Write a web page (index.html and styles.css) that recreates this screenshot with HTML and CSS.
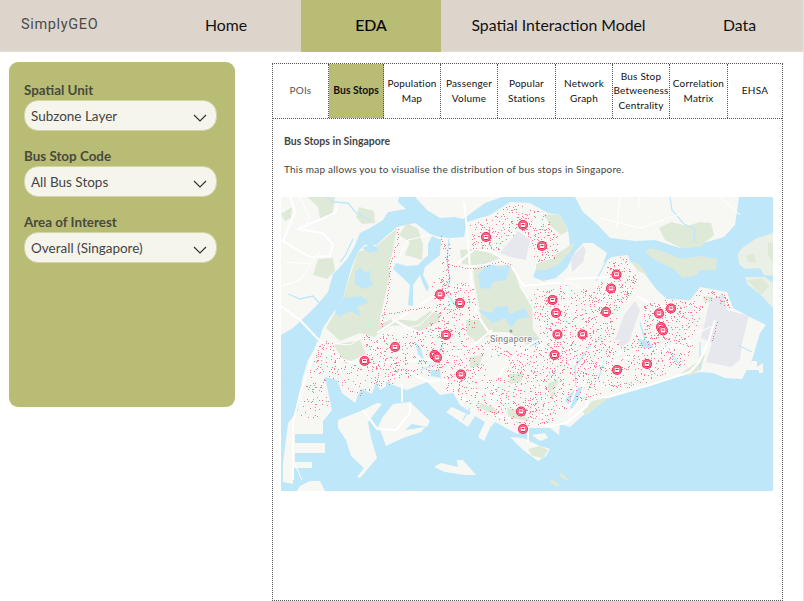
FILE: index.html
```html
<!DOCTYPE html>
<html lang="en">
<head>
<meta charset="utf-8">
<title>SimplyGEO</title>
<link rel="stylesheet" href="styles.css">
</head>
<body>
<nav class="nav">
  <span class="brand">SimplyGEO</span><a>Home</a><a class="on">EDA</a><a>Spatial Interaction Model</a><a>Data</a>
</nav>
<main class="content">
  <aside class="filters">
    <div class="field"><label>Spatial Unit</label><div class="select"><span>Subzone Layer</span><svg viewBox="0 0 14 8"><path d="M1 1l6 6 6-6"/></svg></div></div>
    <div class="field"><label>Bus Stop Code</label><div class="select"><span>All Bus Stops</span><svg viewBox="0 0 14 8"><path d="M1 1l6 6 6-6"/></svg></div></div>
    <div class="field"><label>Area of Interest</label><div class="select"><span>Overall (Singapore)</span><svg viewBox="0 0 14 8"><path d="M1 1l6 6 6-6"/></svg></div></div>
  </aside>
  <section class="panel">
    <div class="tabs">
      <div class="muted"><span>POIs</span></div><div class="active"><span>Bus Stops</span></div><div><span>Population<br>Map</span></div><div><span>Passenger<br>Volume</span></div><div><span>Popular<br>Stations</span></div><div><span>Network<br>Graph</span></div><div><span>Bus Stop<br>Betweeness<br>Centrality</span></div><div><span>Correlation<br>Matrix</span></div><div><span>EHSA</span></div>
    </div>
    <h1>Bus Stops in Singapore</h1>
    <p>This map allows you to visualise the distribution of bus stops in Singapore.</p>
    <svg class="map" viewBox="281 197 492 294" preserveAspectRatio="none">
      <rect class="water" x="281" y="197" width="493" height="295"/>
      <g class="land">
        <path d="M281 197H399L398 202 406 209 388 212 383 220 370 228 360 233 355 245 348 258 340 267 333 274 328 292 318 304 307 315 293 328 281 335Z"/>
        <path d="M415 197H502L485 203 470 214 463 219 455 217 440 218 427 210Z"/>
        <path d="M575 197L583 212 597 224 610 238 636 241 655 240 680 248 697 245 724 237 735 225 738 205 739 197Z"/>
        <path d="M323 328L335 310 343 298 347 283 352 266 358 252 364 245 377 245 385 237 397 227 406 225 415 223 430 234 440 237 450 238 464 237 467 222 490 215 510 202 530 203 548 213 560 215 568 230 570 245 560 256 545 262 536 269 533 277 543 281 556 278 567 268 575 252 583 243 593 243 607 253 603 263 612 257 628 255 630 262 640 267 647 277 657 290 667 299 690 300 700 287 727 292 733 308 750 317 766 325 760 333 752 360 742 379 725 378 713 373 700 372 670 378 643 387 620 393 605 400 587 412 570 427 560 424 559 435 550 428 530 428 517 434 497 423 480 418 460 405 453 393 440 395 427 382 407 390 390 384 380 390 376 382 372 394 362 389 358 395 355 403 342 393 337 380 325 377 332 410 323 421V434H295V443H325V453H295V462H312V468H293V484L283 482V463L288 423 298 410 302 380 308 360 318 343Z"/>
        <path d="M338 420L363 410 377 403 382 404 368 422 371 438 377 458 360 478 357 477 364 468 351 456 346 440 338 428Z"/>
        <path d="M364 410L377 429 382 418 393 404 410 402 430 421 427 427 412 424 405 430 425 427 421 432 403 438 386 446 381 432Z"/>
        <path d="M434 467L441 463 458 467 457 460 463 460 476 475 465 475 445 472Z"/>
        <path d="M446 412L452 407 469 415 473 408 460 403 463 399 495 422 490 428 484 441 478 437 485 422 475 416 468 427Z"/>
        <path d="M510 437L523 438 540 446 550 449 546 456 538 461 523 450Z"/>
        <path d="M532 435L545 433 548 438 540 441Z"/>
        <path d="M300 486L310 481H320L325 491H297ZM745 368L752 361H757V367L763 363V373H759V370H746Z"/>
        <path class="isle" d="M773 233L757 238 742 248 738 254 739 264 745 269 760 268 764 275 773 276ZM745 277L765 277 773 283V308L760 294 748 285Z"/>
      </g>
      <g class="green">
        <path d="M348 282L358 252 378 245 397 228 393 250 389 265 390 275 380 318 381 328 360 333 340 341 326 328 343 298Z"/>
        <path d="M360 333L392 319 416 321 430 311 440 314 439 322 420 331 404 325 390 326 374 337Z"/>
        <path d="M334 345L360 340 366 354 345 364Z"/>
        <path d="M407 223L418 229 423 245 422 260 405 255 410 242 399 235Z"/>
        <path d="M473 268L512 264 520 288 532 305 533 330 543 342 530 347 508 332 490 332 481 318 474 280Z"/>
        <path d="M466 320L481 320 490 336 476 342 467 334ZM460 250L480 248 500 258 480 266 462 264Z"/>
        <path d="M543 214L560 215 568 231 561 235 550 225ZM536 264L550 259 563 258 558 265 546 270 536 270Z"/>
        <path d="M645 252L650 248 665 252 680 259 700 256 717 259 716 270 700 270 697 275 683 278 672 268 655 260ZM630 260L639 264 648 275 638 271Z"/>
        <path d="M659 228L671 222 687 226 700 222 711 223 714 235 700 247 681 248 665 240ZM333 258L335 271 327 279 313 275 318 259ZM359 207L374 211 375 223 362 224 356 217Z"/>
        <path d="M281 214L292 207 291 218 285 221ZM307 197H335L332 215 320 219 318 207ZM747 280L762 278 769 286 761 295ZM746 255L754 254 756 263 748 262ZM768 243H773V262L768 256Z"/>
        <path d="M480 403L493 407 498 413 491 416 479 408ZM507 408L517 410 529 420 517 423 508 415ZM583 411L592 401 611 397 601 404 585 416Z"/>
        <path d="M469 357L483 355 479 366 470 368ZM509 374L524 373 521 382 510 384ZM548 383L558 380 553 400 548 391ZM553 256L576 242 570 252 561 262ZM528 449L540 446 548 450 543 458 532 456Z"/>
        <path d="M551 478L560 485 558 487 550 483ZM560 472L569 479 566 481 560 476ZM410 491L413 490 416 491ZM681 373L699 361 705 354 701 369 689 376ZM394 371L400 368 398 374ZM703 296L713 297 713 303 704 301Z"/>
      </g>
      <g class="air">
        <path d="M500 253L518 231 530 240 526 260 510 257Z"/>
        <path d="M571 258L583 245 586 250 583 262 572 272Z"/>
        <path d="M615 340L624 315 635 301 640 310 629 342 622 347Z"/>
        <path d="M701 338L710 300 723 294 727 310 749 316 742 343 740 360 731 367 706 362 712 343Z"/>
      </g>
      <g class="water">
        <path d="M355 272L361 268 365 273 371 270 369 276 373 285 364 289 355 284ZM343 298L361 296 369 303 357 306 360 316 350 311 338 317 335 310ZM362 248L371 244 380 250 370 253Z"/>
        <path d="M432 236L441 240 440 255 425 267 423 275 429 287 427 292 422 281 420 275 413 285 413 306 408 305 410 285 402 277 393 269 396 263 407 266 418 265 428 255 428 244Z"/>
        <path d="M478 275L488 264 503 267 511 264 506 280 493 282 490 289 480 288ZM478 310L492 313 495 307 507 306 510 314 524 308 530 317 518 319 511 328 505 318 493 323ZM527 335L540 340 539 345 531 345Z"/>
        <path d="M415 342L421 348 424 360 418 354ZM430 370H440L441 378 431 376ZM565 400L576 388 585 387 573 411ZM637 339L649 341 654 348 643 348ZM386 382L390 381V388H386Z"/>
      </g>
      <g class="river">
        <path d="M326 197L334 202 348 203 356 213 370 220M340 262L345 256 353 239M288 294L300 299 313 296 320 304M670 197L672 210 684 224 695 229 694 242M449 239L447 260 450 280 446 293 455 305M443 343L435 365 420 370M545 327L560 335M610 254L596 281M592 343L575 367 576 386M604 360L598 380M665 345L681 367M700 342V370M738 345L752 352M645 340L640 322M463 420L470 408"/>
      </g>
      <g class="road thin">
        <path d="M281 286L300 280 320 251M285 262L310 264M300 197L310 218 302 232M600 218L640 228 680 214M620 197L617 227M640 197L638 210M396 263L408 240 430 235M440 265L460 267 510 262M440 290L470 293M365 335L350 345 330 343M440 305L420 325 400 330M521 287L542 325 560 342M530 340L560 355 590 350 620 340M565 280L585 290 620 300M585 340L602 310 603 285M459 354L480 382 510 401M540 403L560 384 580 340 600 330M480 345L510 359 540 362 560 350M345 381L335 358M600 362L618 370 624 389M640 310L675 322 685 343M655 298L654 322M690 336L715 325M302 480L293 460M720 197L740 215"/>
      </g>
      <g class="road">
        <path d="M281 240L310 257 330 256 333 244 322 233 298 229 335 213 338 203M290 197L295 212 283 241M281 306L300 320 316 337 339 359 367 366 400 361 440 360 475 344 492 330M377 333L398 319 440 292 470 284M392 319L416 332 445 334M393 328L375 347 366 357M464 202L467 230 471 280 477 315 489 333 520 350 550 363M458 263L475 249 493 252 510 264 524 286 565 282 567 279 610 277M567 281L569 330 571 350 575 362M610 277L628 289 645 301 675 310 684 322 689 343 670 350 643 352 620 360 594 365 583 370 570 405 529 420M318 342L301 390 293 423V480M363 410L377 429 396 430 410 413 410 402M402 402V383M393 377L410 373 427 381 445 380 460 397 487 413 520 421 550 426 566 423 587 406 588 396 608 397 650 385 690 372 699 362 709 340 715 320M459 370L475 390 520 407M569 415L580 399 585 380M520 350L501 372 490 402M520 350L536 341 570 337M600 365L625 350 660 350 684 342M528 425V442"/>
      </g>
      <path id="stops" class="stops"/>
      <circle cx="511" cy="331" r="1.5" class="citydot"/>
      <text x="490" y="342" textLength="42" class="city">Singapore</text>
      <g id="pins"></g>
    </svg>
  </section>
</main>
<script src="map.js"></script>
</body>
</html>
```
FILE: styles.css
```css
* { box-sizing: border-box; }
body { margin: 0; width: 804px; height: 601px; overflow: hidden; background: #fff; border-right: 1px solid #e3e3e3; font-family: Lato, sans-serif; color: #444; }
.nav { display: grid; grid-template-columns: 151px 150px 140px 235px 127px; height: 52px; background: #ddd5cc; border-bottom: 1px solid #e4ddd5; color: #111; font-size: 15.8px; line-height: 50px; text-align: center; }
.nav .brand { padding-left: 21px; text-align: left; font-family: Roboto, sans-serif; font-size: 14.5px; letter-spacing: .65px; color: #4b4b4b; line-height: 50px; }
.nav .on { height: 52px; background: #b9bc75; color: #000; -webkit-text-stroke: .15px #000; }
.content { display: flex; align-items: flex-start; gap: 37px; padding: 10px 0 0 9px; }
.filters { width: 226px; height: 345px; border-radius: 9px; background: #b9bc75; padding: 19px 19px 0 15px; }
.field { height: 66px; }
.field label { display: block; height: 19px; line-height: 18px; font-size: 13.4px; font-weight: 700; color: #474a3c; }
.select { display: flex; align-items: center; justify-content: space-between; width: 193px; height: 31px; padding: 0 9px 0 6px; border: 1px solid #d3d5a8; border-radius: 14px; background: #f5f5ec; font-size: 13.5px; color: #444; }
.select svg { width: 14px; height: 8px; margin-top: 4px; fill: none; stroke: #333; stroke-width: 1.2; }
.panel { width: 511px; height: 538px; margin-top: 1px; border: 1px dotted #555; }
.tabs { display: grid; grid-template-columns: 56px 55px 57px 57px 58px 57px 57px 58px 54px; height: 55px; border-bottom: 1px dotted #555; font-size: 10px; line-height: 14.5px; letter-spacing: .2px; color: #111; }
.tabs div { display: flex; align-items: center; justify-content: center; padding-bottom: 1px; text-align: center; border-right: 1px dotted #555; white-space: nowrap; }
.tabs div:last-child { border-right: 0; }
.tabs .muted { color: #555; }
.tabs .active { background: #b9bc75; font-size: 10.4px; font-weight: 700; letter-spacing: 0; color: #111; }
h1 { margin: 14px 0 0 11px; font-size: 10.5px; line-height: 16px; font-weight: 700; color: #444; }
p { margin: 13px 0 0 11px; font-size: 10px; line-height: 15px; letter-spacing: .22px; color: #444; }
.map { display: block; width: 492px; height: 294px; margin: 20px 0 0 8px; overflow: hidden; }
.water { fill: #bee7f9; }
.land { fill: #f7f8f4; }
.isle { fill: #ebf0e6; }
.green { fill: #dfe9d8; }
.air { fill: #e7e7ee; }
.river { fill: none; stroke: #bee7f9; stroke-width: 1.3; }
.road { fill: none; stroke: #fff; stroke-width: 2; stroke-linejoin: round; }
.thin { stroke-width: 1; }
.stops { fill: #f02c5a; opacity: .62; shape-rendering: crispEdges; }
.citydot { fill: #999; }
.city { font: 500 9px Roboto, sans-serif; fill: #8d9192; stroke: #fff; stroke-width: 1.5px; paint-order: stroke; }
.disc { fill: #ef1f50; }
.ring { fill: none; stroke: #fff; stroke-width: .5; stroke-opacity: .8; }
.bus { fill: #fff; }
.window { fill: #ef1f50; }
```
FILE: map.js
```js
// Areas served by buses: [polygon, number of stops]
const areas = [
  [[316,345,329,337,345,362,368,366,400,361,400,385,380,386,355,398,342,385,325,375,330,400,318,420,300,422,305,380], 210],
  [[362,335,378,328,398,338,440,312,445,372,400,380,370,368], 270],
  [[430,285,441,275,472,285,478,320,465,345,440,345], 210],
  [[440,240,450,240,450,282,440,285], 25],
  [[469,225,490,216,512,203,530,208,517,230,500,250,470,248], 150],
  [[530,207,545,214,563,245,556,258,535,262,530,238,518,228], 130],
  [[440,345,470,345,500,337,530,350,540,410,530,427,505,424,465,403,445,388], 400],
  [[533,288,566,285,574,345,570,405,545,427,530,420,530,350,540,335,530,310], 400],
  [[571,289,600,285,610,258,628,256,637,280,620,310,610,345,605,390,575,405,571,350], 480],
  [[605,345,640,332,685,340,695,345,684,365,640,385,608,394], 260],
  [[642,305,665,299,690,302,700,289,725,293,731,310,715,300,703,303,697,330,683,343,645,338], 240]
];
const holes = [
  [500,253,518,231,530,240,526,260,510,257],
  [615,340,624,315,635,301,640,310,629,342,622,347],
  [475,268,512,264,532,305,530,328,510,328,490,332,477,310],
  [485,360,505,355,510,367,495,380,485,375],
  [360,333,392,319,416,321,430,311,440,314,420,331,404,325,374,337]
];
const routes = [
  [397,228,397,242,389,265,389,278,386,300,381,322,382,328],
  [440,236,446,250,448,280],
  [382,314,410,309,432,306],
  [448,265,475,268,500,261,512,264],
  [723,294,730,310],
  [716,322,711,343]
];
let seed = 731;
const rnd = () => ((seed = (seed * 16807) % 2147483647) / 2147483647);
function inside(p, x, y) {
  let r = false;
  for (let i = 0, j = p.length - 2; i < p.length; j = i, i += 2) {
    if ((p[i + 1] > y) !== (p[j + 1] > y) &&
        x < (p[j] - p[i]) * (y - p[i + 1]) / (p[j + 1] - p[i + 1]) + p[i]) r = !r;
  }
  return r;
}
let d = "";
const dot = (x, y) => { d += `M${Math.round(x)} ${Math.round(y)}h1v1h-1z`; };
for (const [p, n] of areas) {
  const xs = p.filter((_, i) => i % 2 === 0), ys = p.filter((_, i) => i % 2);
  const x0 = Math.min(...xs), x1 = Math.max(...xs), y0 = Math.min(...ys), y1 = Math.max(...ys);
  for (let k = 0, tries = 0; k < n && tries < 9000; tries++) {
    const x = x0 + rnd() * (x1 - x0), y = y0 + rnd() * (y1 - y0);
    if (inside(p, x, y) && !holes.some(h => inside(h, x, y))) { dot(x, y); k++; }
  }
}
for (const r of routes) {
  for (let i = 0; i < r.length - 2; i += 2) {
    const n = Math.ceil(Math.hypot(r[i + 2] - r[i], r[i + 3] - r[i + 1]) / 3);
    for (let k = 0; k < n; k++) {
      dot(r[i] + (r[i + 2] - r[i]) * k / n + rnd(), r[i + 1] + (r[i + 3] - r[i + 1]) * k / n + rnd());
    }
  }
}
document.getElementById("stops").setAttribute("d", d);

const pins = [[486,237],[523,225],[542,246],[440,294.5],[460,303],[552.5,300],[556,313],[557.5,334.5],[582.5,334.5],[606,312],[616.5,274.5],[611,288.5],[671,308.5],[659,313.5],[661,327],[663,330.5],[446,335],[395,347],[364.5,361],[434.5,355],[437,357.5],[461,374.5],[554.5,355],[617,370],[647,364],[521,411.5],[523,429]];
document.getElementById("pins").innerHTML = pins.map(([x, y]) =>
  `<g transform="translate(${x} ${y})"><circle class="disc" r="5"/><circle class="ring" r="3.8"/><rect class="bus" x="-2.4" y="-2.3" width="4.8" height="4.4" rx=".8"/><rect class="window" x="-1.5" y="-1.1" width="3" height="1.2"/></g>`).join("");
```
